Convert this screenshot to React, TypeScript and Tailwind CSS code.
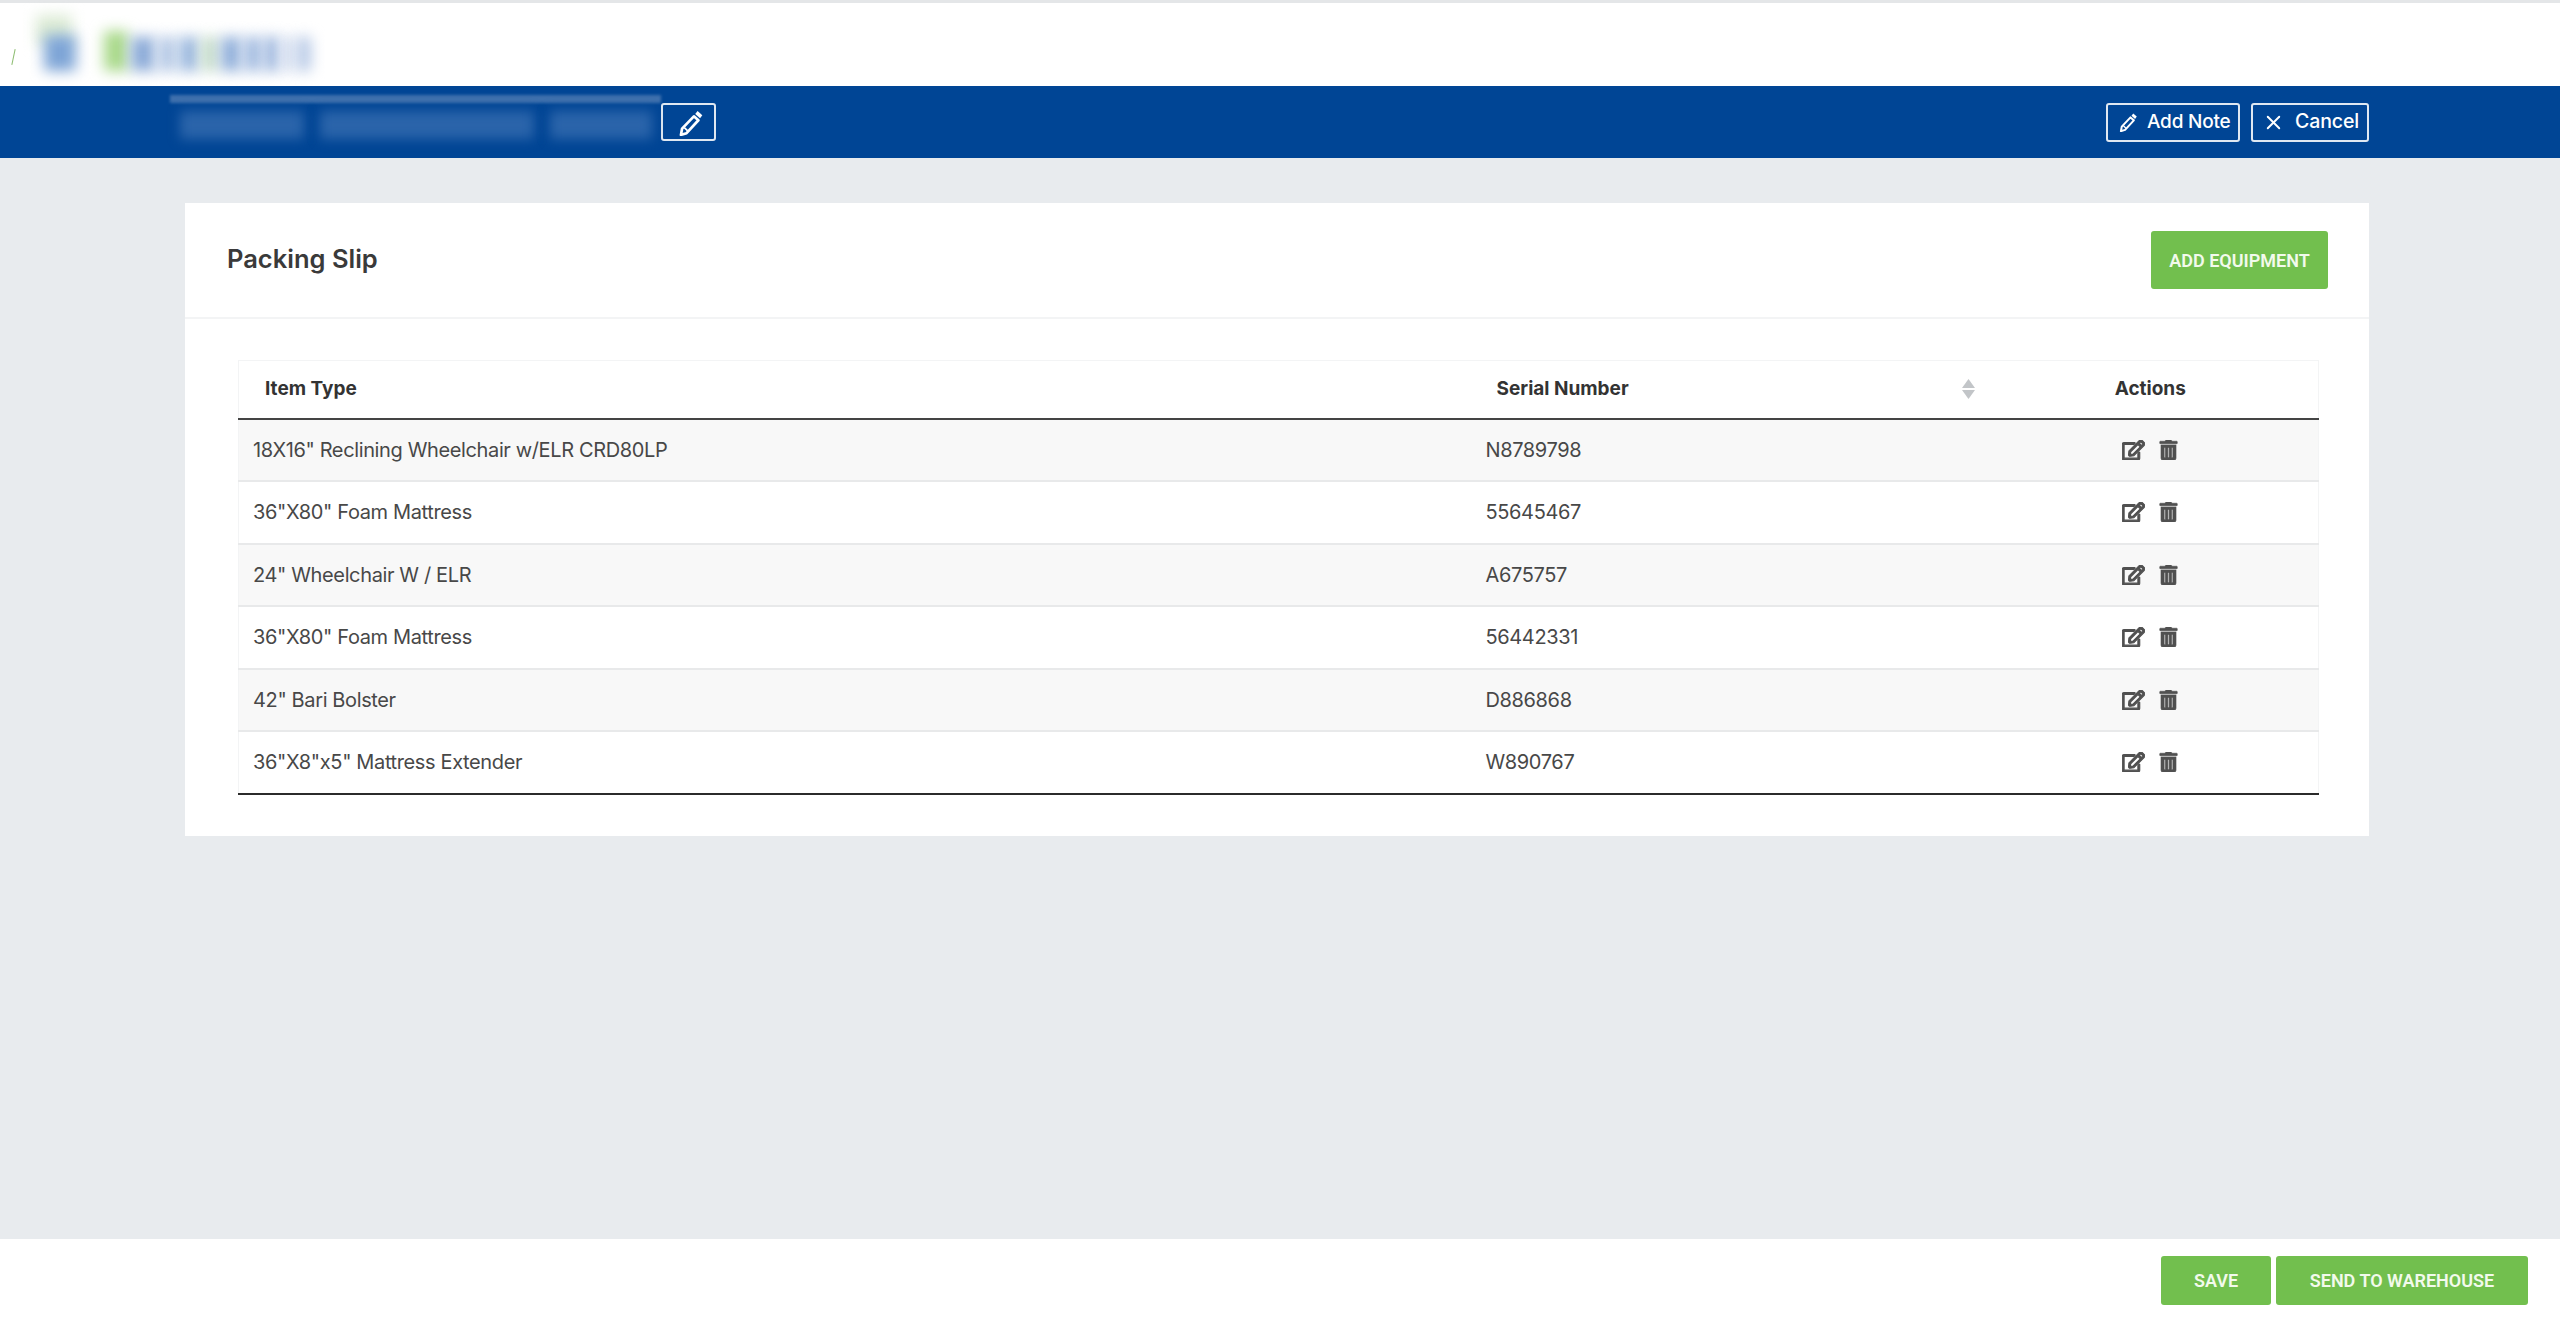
import React from "react";
import { FaRegEdit, FaTrashAlt } from "react-icons/fa";
import { X } from "lucide-react";

const rows = [
  ['18X16" Reclining Wheelchair w/ELR CRD80LP', "N8789798"],
  ['36"X80" Foam Mattress', "55645467"],
  ['24" Wheelchair W / ELR', "A675757"],
  ['36"X80" Foam Mattress', "56442331"],
  ['42" Bari Bolster', "D886868"],
  ['36"X8"x5" Mattress Extender', "W890767"],
];

function Pencil({ className }: { className: string }) {
  return (
    <svg viewBox="0 0 24 24" className={className} fill="none" stroke="currentColor" strokeWidth="2.4" strokeLinejoin="round">
      <path d="M15 6.500 19 10 8.500 21.500 3.500 23 4.500 17.500Z" />
      <path d="M6.500 16.500 9.500 19.500" strokeWidth="1.500" />
      <path d="M18.300 1.800 22.500 5.500 20.500 8.300 16.200 4.500Z" fill="currentColor" stroke="none" />
    </svg>
  );
}

function SortIcon() {
  return (
    <svg viewBox="0 0 13 20" className="h-[20px] w-[13px] fill-[#c2c5c8]">
      <path d="M6.500 0 13 9H0Z" />
      <path d="M0 11h13L6.500 20Z" />
    </svg>
  );
}

const logoBars = [
  ["w-[32px]", "h-[36px]", "bg-[#7ea5d6]"],
  ["w-[22px]", "h-[10px]", "bg-transparent"],
  ["w-[24px]", "h-[40px]", "bg-[#a9d98a]"],
  ["w-[24px]", "h-[34px]", "bg-[#8cabd8]"],
  ["w-[18px]", "h-[34px]", "bg-[#b4c8e5]"],
  ["w-[20px]", "h-[34px]", "bg-[#9bb8de]"],
  ["w-[16px]", "h-[34px]", "bg-[#c4dcc8]"],
  ["w-[20px]", "h-[34px]", "bg-[#90afda]"],
  ["w-[18px]", "h-[34px]", "bg-[#a2bbe0]"],
  ["w-[14px]", "h-[34px]", "bg-[#97b2dc]"],
  ["w-[12px]", "h-[34px]", "bg-[#d0dbee]"],
  ["w-[14px]", "h-[34px]", "bg-[#b6c8e6]"],
];

export default function App() {
  return (
    <div className="flex h-[1342px] w-[2560px] flex-col overflow-hidden bg-white font-['Inter','Liberation_Sans',sans-serif] text-[#484848]">
      <header className="relative flex h-[86px] shrink-0 items-end gap-[3px] border-t-[3px] border-[#e4e6e8] bg-white pb-[15px] pl-[44px]">
        <div className="absolute left-[13px] top-[46px] h-[16px] w-px rotate-12 bg-[#8cbc70]" />
        <div className="absolute left-[36px] top-[12px] h-[30px] w-[36px] bg-[#dcebd5] blur-[7px]" />
        {logoBars.map(([w, h, c], i) => (
          <div key={i} className={`${w} ${h} ${c} blur-[7px]`} />
        ))}
      </header>

      <div className="flex h-[72px] shrink-0 items-center justify-between bg-[#004595] pl-[170px] pr-[191px]">
        <div className="flex items-center">
          <div className="relative h-[54px] w-[491px]">
            <div className="absolute left-0 top-0 h-[8px] w-full bg-[#3e70ad] blur-[1.5px]" />
            <div className="absolute left-[10px] top-[16px] h-[28px] w-[124px] bg-[#2a64aa] blur-[6px]" />
            <div className="absolute left-[150px] top-[16px] h-[28px] w-[214px] bg-[#2a64aa] blur-[6px]" />
            <div className="absolute left-[380px] top-[16px] h-[28px] w-[102px] bg-[#2a64aa] blur-[6px]" />
          </div>
          <button className="flex h-[38px] w-[55px] items-center justify-center rounded-[3px] border-2 border-[#dfe8f2] pl-[3px] text-white">
            <Pencil className="h-[27px] w-[27px]" />
          </button>
        </div>
        <div className="flex gap-[11px]">
          <button className="flex h-[39px] w-[134px] items-center gap-[9px] rounded-[3px] border-2 border-[#dfe8f2] pl-[10px] text-[19px] font-medium tracking-[-0.2px] text-white">
            <Pencil className="h-[20px] w-[20px]" />
            Add Note
          </button>
          <button className="flex h-[39px] w-[118px] items-center gap-[10px] rounded-[3px] border-2 border-[#dfe8f2] pl-[9px] text-[19.5px] font-medium tracking-[-0.1px] text-white">
            <X className="h-[23px] w-[23px]" strokeWidth={2} />
            Cancel
          </button>
        </div>
      </div>

      <main className="flex-1 bg-[#e8ebee] pl-[185px] pr-[191px] pt-[45px]">
        <section className="h-[633px] bg-white">
          <div className="flex h-[116px] items-center justify-between border-b-2 border-[#f3f4f5] pl-[42px] pr-[41px]">
            <h1 className="pb-[2px] text-[25.5px] font-semibold text-[#3a3a3a]">Packing Slip</h1>
            <button className="h-[58px] w-[177px] rounded-[3px] bg-[#72bf4e] font-['Roboto',sans-serif] text-[18px] font-semibold text-[#f2faec]">
              ADD EQUIPMENT
            </button>
          </div>
          <div className="pl-[53px] pr-[51px] pt-[41px]">
            <table className="w-[2080px] table-fixed border-collapse">
              <colgroup>
                <col className="w-[1233px]" />
                <col className="w-[511px]" />
                <col className="w-[336px]" />
              </colgroup>
              <thead>
                <tr className="h-[58px] border-x border-t border-b-2 border-[#f3f4f5] border-b-[#444444]">
                  <th className="pl-[26px] text-left text-[19px] font-bold text-[#333333]">Item Type</th>
                  <th className="pl-[25px] pr-[8px] text-left text-[19px] font-bold text-[#333333]">
                    <div className="flex items-center justify-between">
                      Serial Number
                      <SortIcon />
                    </div>
                  </th>
                  <th className="text-center text-[19px] font-bold text-[#333333]">Actions</th>
                </tr>
              </thead>
              <tbody>
                {rows.map(([item, serial], i) => (
                  <tr
                    key={i}
                    className={`h-[62.5px] border-x border-[#f3f4f5] ${
                      i === rows.length - 1 ? "border-b-2 border-b-[#2b2b2b]" : "border-b-2 border-b-[#e8e9ea]"
                    } ${i % 2 === 0 ? "bg-[#f8f8f8]" : "bg-white"}`}
                  >
                    <td className="pl-[14px] text-[20px] tracking-[-0.37px]">{item}</td>
                    <td className="pl-[14px] text-[20px] tracking-[-0.37px]">{serial}</td>
                    <td className="pl-[139px]">
                      <div className="flex items-center gap-[14px] text-[#505050]">
                        <FaRegEdit className="h-[20px] w-[23px]" stroke="currentColor" strokeWidth={28} />
                        <FaTrashAlt className="h-[20px] w-[19px]" stroke="currentColor" strokeWidth={16} />
                      </div>
                    </td>
                  </tr>
                ))}
              </tbody>
            </table>
          </div>
        </section>
      </main>

      <footer className="flex h-[103px] shrink-0 justify-end gap-[5px] bg-white pr-[32px] pt-[17px]">
        <button className="h-[49px] w-[110px] rounded-[3px] bg-[#72bf4e] font-['Roboto',sans-serif] text-[18px] font-semibold text-[#f2faec]">
          SAVE
        </button>
        <button className="h-[49px] w-[252px] rounded-[3px] bg-[#72bf4e] font-['Roboto',sans-serif] text-[18px] font-semibold text-[#f2faec]">
          SEND TO WAREHOUSE
        </button>
      </footer>
    </div>
  );
}
